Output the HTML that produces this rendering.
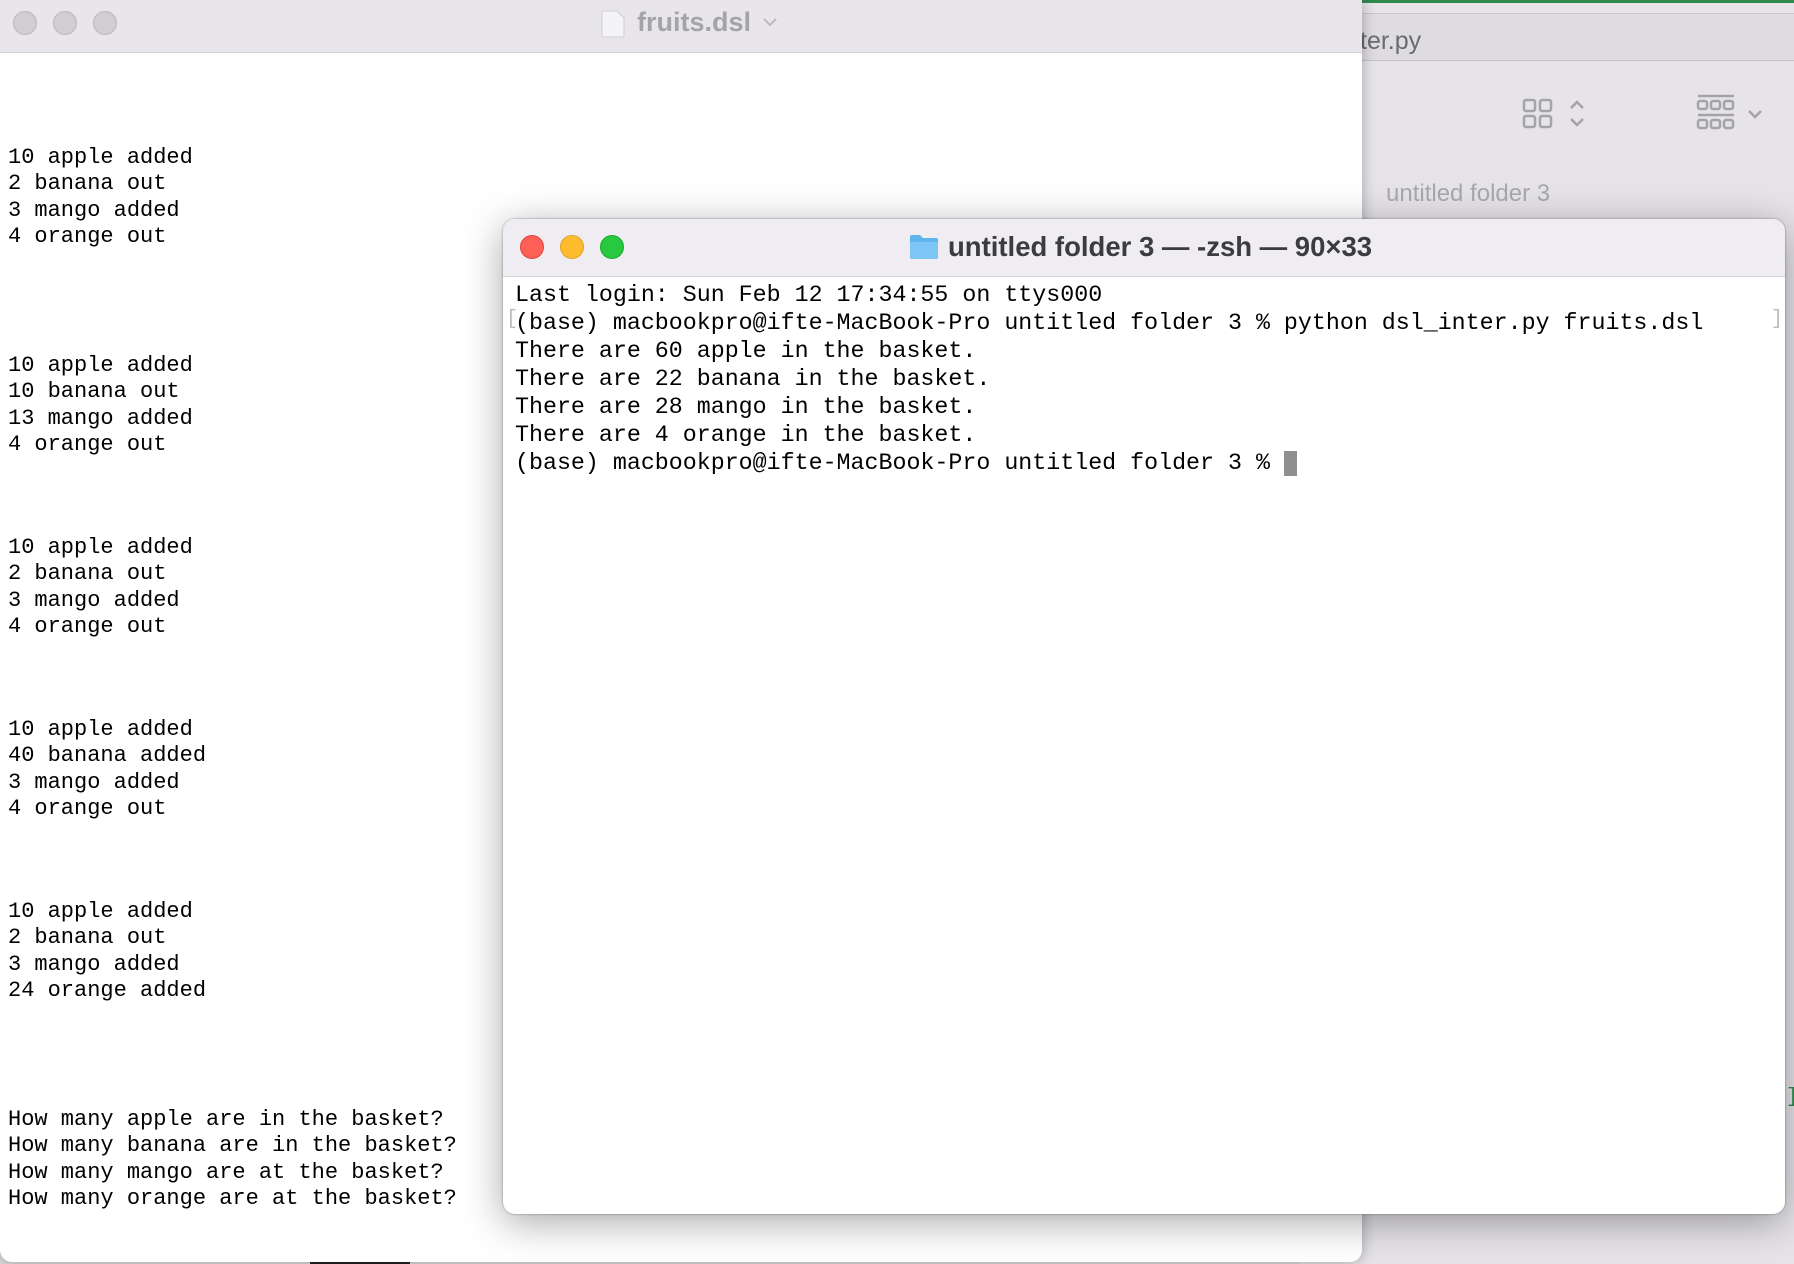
<!DOCTYPE html>
<html><head><meta charset="utf-8"><style>
*{margin:0;padding:0;box-sizing:border-box}
body{width:1794px;height:1264px;overflow:hidden;background:#dcdadc;position:relative;font-family:"Liberation Sans",sans-serif}
.back{position:absolute;left:1300px;top:0;width:494px;height:1264px;background:#e6e4e9}
.back .top{position:absolute;left:0;top:0;width:494px;height:3px;background:#2f8a4e}
.back .tab{position:absolute;left:0;top:13px;width:494px;height:48px;background:#dedcdf;border-top:1px solid #c8c6c9;border-bottom:1px solid #c4c2c5}
.ed{position:absolute;left:0;top:0;width:1362px;height:1262px;background:#fff;border-radius:0 0 12px 12px;box-shadow:0 0 14px rgba(0,0,0,.3);overflow:hidden}
.ed .tb{height:53px;background:#e8e6ea;border-bottom:1px solid #d4d2d5;position:relative}
.dot{position:absolute;width:24px;height:24px;border-radius:50%}
.g{background:#d0ced1;border:1px solid #b9b7ba}
.ed pre{position:absolute;left:8px;font-family:"Liberation Mono",monospace;font-size:22px;line-height:26.3px;color:#000}
.term{position:absolute;left:503px;top:219px;width:1282px;height:995px;background:#fff;border-radius:12px;box-shadow:0 8px 40px rgba(0,0,0,.35),0 0 2px rgba(0,0,0,.4);overflow:hidden}
.term .tb{height:58px;background:#efedf2;border-bottom:1px solid #d6d4d8;position:relative}
.term pre{position:absolute;left:12px;top:62px;font-family:"Liberation Mono",monospace;font-size:23.3px;line-height:28px;color:#000}
</style></head><body>
<div class="back">
<div class="top"></div>
<div class="tab"><span style="position:absolute;left:60px;top:13px;font-size:25px;color:#6b6a6d">ter.py</span></div>
<svg style="position:absolute;left:220px;top:92px" width="180" height="45" viewBox="0 0 180 45" fill="none" stroke="#a4a3a7" stroke-width="2.5">
<rect x="4" y="8" width="11" height="11" rx="2"/><rect x="20" y="8" width="11" height="11" rx="2"/><rect x="4" y="24" width="11" height="11" rx="2"/><rect x="20" y="24" width="11" height="11" rx="2"/>
<path d="M51 16l6-6 6 6M51 27l6 6 6-6"/>
</svg>
<svg style="position:absolute;left:395px;top:92px" width="90" height="45" viewBox="0 0 90 45" fill="none" stroke="#a4a3a7" stroke-width="2.5">
<path d="M3 4h36M3 23h36"/>
<rect x="3" y="9" width="9" height="8" rx="2"/><rect x="16" y="9" width="9" height="8" rx="2"/><rect x="29" y="9" width="9" height="8" rx="2"/>
<rect x="3" y="28" width="9" height="8" rx="2"/><rect x="16" y="28" width="9" height="8" rx="2"/><rect x="29" y="28" width="9" height="8" rx="2"/>
<path d="M54 19l6 6 6-6"/>
</svg>
<span style="position:absolute;left:86px;top:180px;font-size:24px;color:#a9a8ac">untitled folder 3</span>
<span style="position:absolute;left:486px;top:1086px;font-size:20px;color:#2f8a4e;font-family:'Liberation Mono',monospace">]</span>
</div>
<div style="position:absolute;left:310px;top:1260px;width:100px;height:4px;background:#222"></div>
<div class="ed">
<div class="tb">
<div class="dot g" style="left:13px;top:11px"></div><div class="dot g" style="left:53px;top:11px"></div><div class="dot g" style="left:93px;top:11px"></div>
<svg style="position:absolute;left:600px;top:9px" width="26" height="30" viewBox="0 0 26 30"><path d="M2 2h15l7 7v19H2z" fill="#f4f3f5" stroke="#cfcdd0"/></svg>
<span style="position:absolute;left:637px;top:7px;font-size:27px;font-weight:bold;color:#a4a3a6">fruits.dsl</span>
<svg style="position:absolute;left:762px;top:16px" width="16" height="12"><path d="M2 3l6 6 6-6" fill="none" stroke="#bcbbbe" stroke-width="2"/></svg>
</div>
<pre style="top:145px">10 apple added
2 banana out
3 mango added
4 orange out</pre>
<pre style="top:353px">10 apple added
10 banana out
13 mango added
4 orange out</pre>
<pre style="top:535px">10 apple added
2 banana out
3 mango added
4 orange out</pre>
<pre style="top:717px">10 apple added
40 banana added
3 mango added
4 orange out</pre>
<pre style="top:899px">10 apple added
2 banana out
3 mango added
24 orange added</pre>
<pre style="top:1107px">How many apple are in the basket?
How many banana are in the basket?
How many mango are at the basket?
How many orange are at the basket?</pre>
</div>
<div class="term">
<div class="tb">
<div class="dot" style="left:17px;top:16px;background:#fe5f57;border:1px solid #e0443e"></div>
<div class="dot" style="left:57px;top:16px;background:#febc2e;border:1px solid #dea123"></div>
<div class="dot" style="left:97px;top:16px;background:#28c840;border:1px solid #1aab29"></div>
<svg style="position:absolute;left:406px;top:15px" width="30" height="26" viewBox="0 0 30 26"><path d="M1 3a2 2 0 0 1 2-2h8l3 3h13a2 2 0 0 1 2 2v17a2 2 0 0 1-2 2H3a2 2 0 0 1-2-2z" fill="#5eb4ec"/><path d="M1 8h28v15a2 2 0 0 1-2 2H3a2 2 0 0 1-2-2z" fill="#7cc6f5"/></svg>
<span style="position:absolute;left:445px;top:12px;font-size:27.5px;font-weight:bold;color:#3c3b3e">untitled folder 3 — -zsh — 90×33</span>
</div>
<pre>Last login: Sun Feb 12 17:34:55 on ttys000
(base) macbookpro@ifte-MacBook-Pro untitled folder 3 % python dsl_inter.py fruits.dsl
There are 60 apple in the basket.
There are 22 banana in the basket.
There are 28 mango in the basket.
There are 4 orange in the basket.
(base) macbookpro@ifte-MacBook-Pro untitled folder 3 % </pre>
<span style="position:absolute;left:3px;top:89px;font-size:20px;color:#bbb;font-family:'Liberation Mono',monospace">[</span>
<span style="position:absolute;left:1268px;top:89px;font-size:20px;color:#bbb;font-family:'Liberation Mono',monospace">]</span>
<div style="position:absolute;left:781px;top:232px;width:13px;height:25px;background:#8f8f8f"></div>
</div>
</body></html>
